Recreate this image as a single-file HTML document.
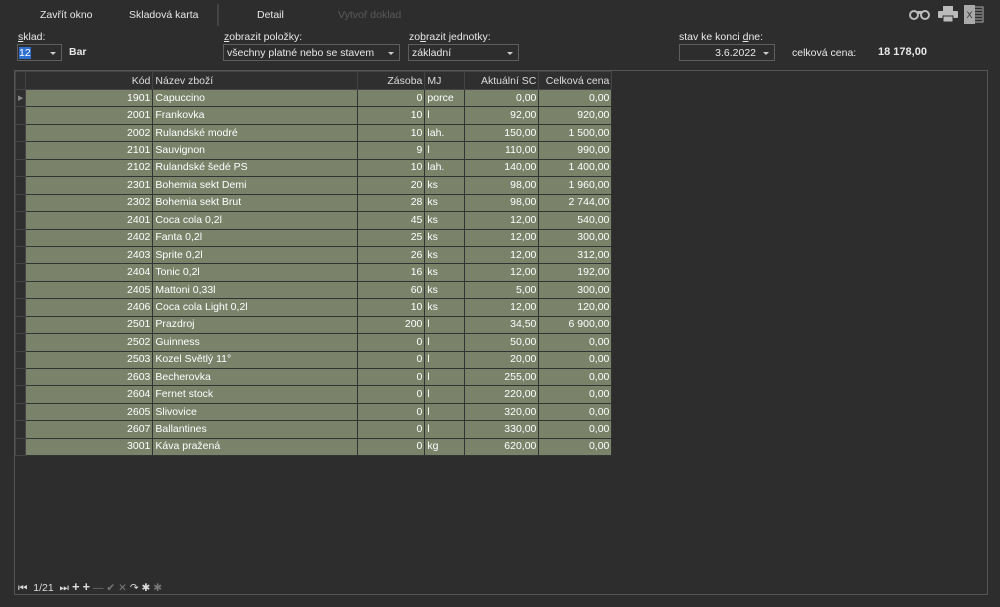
<!DOCTYPE html>
<html><head><meta charset="utf-8"><style>
body{margin:0;width:1000px;height:607px;background:#2d2d2d;font-family:"Liberation Sans",sans-serif;font-size:10.5px;color:#e8e8e8;position:relative;overflow:hidden}
.a{position:absolute;white-space:nowrap}
.box{position:absolute;border:1px solid #5e5e5e;background:#2d2d2d;height:17px;box-sizing:border-box;padding:2px 3px;font-size:10.5px}
.arr{position:absolute;right:5px;top:7px;width:0;height:0;border-left:3px solid transparent;border-right:3px solid transparent;border-top:3px solid #ccc}
table{border-collapse:collapse;position:absolute;left:15px;top:71px;table-layout:fixed}
td{height:16.45px;padding:0 2px;border:1px solid #333;background:#7a826a;color:#fff;font-size:10.5px;overflow:hidden;white-space:nowrap;line-height:15px}
th{height:17px;padding:0 2px;border:1px solid #444;background:#2f2f2f;color:#ddd;font-weight:normal;font-size:10.5px;white-space:nowrap}
td.i,th.i{background:#2f2f2f;border-color:#444}
.r{text-align:right}.l{text-align:left}
</style></head><body>
<div class="a" style="left:40px;top:9px">Zavřít okno</div>
<div class="a" style="left:129px;top:9px">Skladová karta</div>
<div class="a" style="left:217px;top:4px;width:2px;height:22px;background:#444"></div>
<div class="a" style="left:257px;top:9px">Detail</div>
<div class="a" style="left:338px;top:9px;color:#5a5a5a">Vytvoř doklad</div>
<svg class="a" style="left:909px;top:8px" width="22" height="12"><circle cx="5" cy="7" r="4" fill="none" stroke="#bbb" stroke-width="2"/><circle cx="16" cy="7" r="4" fill="none" stroke="#bbb" stroke-width="2"/><rect x="8" y="3" width="5" height="3" fill="#bbb"/></svg>
<svg class="a" style="left:938px;top:6px" width="20" height="16"><rect x="5" y="0" width="10" height="5" fill="#bbb"/><rect x="0" y="5" width="20" height="7" rx="1" fill="#bbb"/><rect x="5" y="10" width="10" height="6" fill="#bbb" stroke="#2d2d2d"/></svg>
<svg class="a" style="left:964px;top:5px" width="20" height="19"><rect x="8" y="2" width="11" height="15" fill="none" stroke="#aaa"/><path d="M10 5h8M10 8h8M10 11h8M10 14h8" stroke="#aaa"/><rect x="0" y="0" width="11" height="19" fill="#aaa"/><text x="2.5" y="13" font-size="9" fill="#333" font-family="Liberation Sans">X</text></svg>

<div class="a" style="left:18px;top:31px"><u>s</u>klad:</div>
<div class="box" style="left:17px;top:44px;width:45px;padding:2px 1px"><span style="background:#2f6fd0;color:#fff">12</span><span class="arr"></span></div>
<div class="a" style="left:69px;top:46px;font-weight:bold">Bar</div>
<div class="a" style="left:224px;top:31px"><u>z</u>obrazit položky:</div>
<div class="box" style="left:223px;top:44px;width:177px">všechny platné nebo se stavem<span class="arr"></span></div>
<div class="a" style="left:409px;top:31px">zo<u>b</u>razit jednotky:</div>
<div class="box" style="left:408px;top:44px;width:111px">základní<span class="arr"></span></div>
<div class="a" style="left:679px;top:31px">stav ke konci <u>d</u>ne:</div>
<div class="box" style="left:679px;top:44px;width:96px;text-align:right;padding-right:18px">3.6.2022<span class="arr"></span></div>
<div class="a" style="left:792px;top:47px">celková cena:</div>
<div class="a" style="left:878px;top:46px;font-weight:bold;font-size:11px">18 178,00</div>

<div class="a" style="left:14px;top:70px;width:974px;height:525px;border:1px solid #555;box-sizing:border-box"></div>
<table>
<colgroup><col style="width:10px"><col style="width:127px"><col style="width:205px"><col style="width:67px"><col style="width:40px"><col style="width:74px"><col style="width:73px"></colgroup>
<tr><th class="i"></th><th class="r">Kód</th><th class="l">Název zboží</th><th class="r">Zásoba</th><th class="l">MJ</th><th class="r">Aktuální SC</th><th class="r">Celková cena</th></tr>
<tr><td class="i" style="color:#888;font-size:7px">&#9654;</td><td class="r">1901</td><td>Capuccino</td><td class="r">0</td><td>porce</td><td class="r">0,00</td><td class="r">0,00</td></tr>
<tr><td class="i"></td><td class="r">2001</td><td>Frankovka</td><td class="r">10</td><td>l</td><td class="r">92,00</td><td class="r">920,00</td></tr>
<tr><td class="i"></td><td class="r">2002</td><td>Rulandské modré</td><td class="r">10</td><td>lah.</td><td class="r">150,00</td><td class="r">1 500,00</td></tr>
<tr><td class="i"></td><td class="r">2101</td><td>Sauvignon</td><td class="r">9</td><td>l</td><td class="r">110,00</td><td class="r">990,00</td></tr>
<tr><td class="i"></td><td class="r">2102</td><td>Rulandské šedé PS</td><td class="r">10</td><td>lah.</td><td class="r">140,00</td><td class="r">1 400,00</td></tr>
<tr><td class="i"></td><td class="r">2301</td><td>Bohemia sekt Demi</td><td class="r">20</td><td>ks</td><td class="r">98,00</td><td class="r">1 960,00</td></tr>
<tr><td class="i"></td><td class="r">2302</td><td>Bohemia sekt Brut</td><td class="r">28</td><td>ks</td><td class="r">98,00</td><td class="r">2 744,00</td></tr>
<tr><td class="i"></td><td class="r">2401</td><td>Coca cola 0,2l</td><td class="r">45</td><td>ks</td><td class="r">12,00</td><td class="r">540,00</td></tr>
<tr><td class="i"></td><td class="r">2402</td><td>Fanta 0,2l</td><td class="r">25</td><td>ks</td><td class="r">12,00</td><td class="r">300,00</td></tr>
<tr><td class="i"></td><td class="r">2403</td><td>Sprite 0,2l</td><td class="r">26</td><td>ks</td><td class="r">12,00</td><td class="r">312,00</td></tr>
<tr><td class="i"></td><td class="r">2404</td><td>Tonic 0,2l</td><td class="r">16</td><td>ks</td><td class="r">12,00</td><td class="r">192,00</td></tr>
<tr><td class="i"></td><td class="r">2405</td><td>Mattoni 0,33l</td><td class="r">60</td><td>ks</td><td class="r">5,00</td><td class="r">300,00</td></tr>
<tr><td class="i"></td><td class="r">2406</td><td>Coca cola Light 0,2l</td><td class="r">10</td><td>ks</td><td class="r">12,00</td><td class="r">120,00</td></tr>
<tr><td class="i"></td><td class="r">2501</td><td>Prazdroj</td><td class="r">200</td><td>l</td><td class="r">34,50</td><td class="r">6 900,00</td></tr>
<tr><td class="i"></td><td class="r">2502</td><td>Guinness</td><td class="r">0</td><td>l</td><td class="r">50,00</td><td class="r">0,00</td></tr>
<tr><td class="i"></td><td class="r">2503</td><td>Kozel Světlý 11°</td><td class="r">0</td><td>l</td><td class="r">20,00</td><td class="r">0,00</td></tr>
<tr><td class="i"></td><td class="r">2603</td><td>Becherovka</td><td class="r">0</td><td>l</td><td class="r">255,00</td><td class="r">0,00</td></tr>
<tr><td class="i"></td><td class="r">2604</td><td>Fernet stock</td><td class="r">0</td><td>l</td><td class="r">220,00</td><td class="r">0,00</td></tr>
<tr><td class="i"></td><td class="r">2605</td><td>Slivovice</td><td class="r">0</td><td>l</td><td class="r">320,00</td><td class="r">0,00</td></tr>
<tr><td class="i"></td><td class="r">2607</td><td>Ballantines</td><td class="r">0</td><td>l</td><td class="r">330,00</td><td class="r">0,00</td></tr>
<tr><td class="i"></td><td class="r">3001</td><td>Káva pražená</td><td class="r">0</td><td>kg</td><td class="r">620,00</td><td class="r">0,00</td></tr>
</table>
<div class="a" style="left:18px;top:579px;font-size:10.5px;color:#ddd">⏮&nbsp; 1/21 &nbsp;⏭ <b style="font-size:13px">+</b> <b style="font-size:13px">+</b> <span style="color:#777">— ✔ ✕</span> ↷ ✱ <span style="color:#777">✱</span></div>
</body></html>
